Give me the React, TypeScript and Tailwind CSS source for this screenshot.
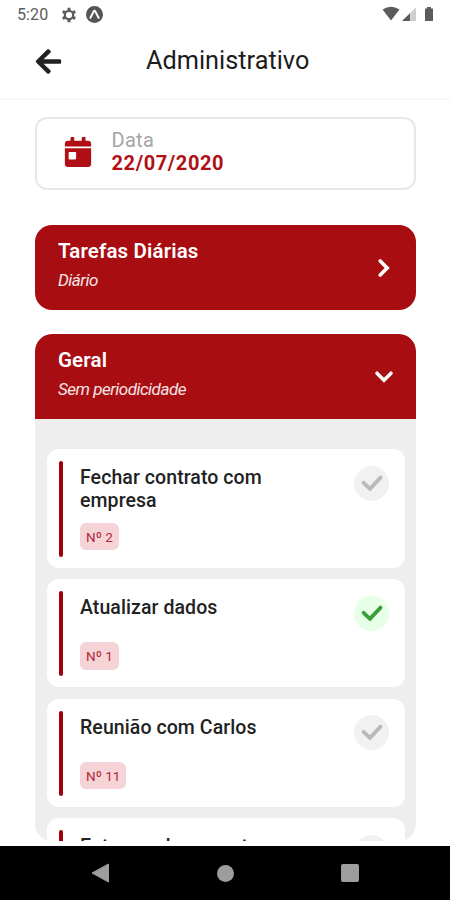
import { FaArrowLeft, FaCalendarDay } from "react-icons/fa";

interface Task {
  title: string;
  number: number;
  done: boolean;
  tall?: boolean;
}

const tasks: Task[] = [
  { title: "Fechar contrato com empresa", number: 2, done: false, tall: true },
  { title: "Atualizar dados", number: 1, done: true },
  { title: "Reunião com Carlos", number: 11, done: false },
  { title: "Entregar documentos", number: 12, done: false },
];

const StatusBar = () => (
  <div className="h-7 shrink-0 flex items-center justify-between pl-[17px] pr-[15px] text-[#5c5c5c]">
    <div className="flex items-center pt-[1px]">
      <span className="w-[44px] text-[16px] leading-5 tracking-[0.1px]">5:20</span>
      <svg className="size-4" viewBox="0 0 16 16" fill="none" stroke="currentColor">
        <circle cx="8" cy="8" r="4.2" strokeWidth="2.2" />
        <path
          d="M8 0.8 V3.4 M8 12.6 V15.2 M1.8 4.4 L4 5.7 M12 10.3 L14.2 11.6 M1.8 11.6 L4 10.3 M12 5.7 L14.2 4.4"
          strokeWidth="3"
        />
      </svg>
      <svg className="ml-[9px] size-[17px]" viewBox="0 0 17 17">
        <circle cx="8.5" cy="8.5" r="8.5" fill="#555" />
        <path
          d="M4.4 11.8 L7.6 5.6 Q8.5 4 9.4 5.6 L12.6 11.8"
          fill="none"
          stroke="#fff"
          strokeWidth="2"
          strokeLinecap="round"
          strokeLinejoin="round"
        />
      </svg>
    </div>
    <svg width="53" height="16" viewBox="0 0 53 16">
      <path d="M0.5 3.5 Q9 -2.2 17.5 3.5 L9 14.5 Z" fill="#5c5c5c" />
      <path d="M20 15 L34 1.5 V15 Z" fill="#cfcfcf" />
      <path d="M20 15 L28 7.2 V15 Z" fill="#5c5c5c" />
      <path d="M43 2.5 H45 V1 H49 V2.5 H51 V15 H43 Z" fill="#5c5c5c" />
    </svg>
  </div>
);

const Chevron = ({ open }: { open?: boolean }) => (
  <svg className={open ? "size-6 rotate-90" : "size-6"} viewBox="0 0 24 24">
    <path
      d="M8.2 5 L15.2 12 L8.2 19"
      fill="none"
      stroke="#fff"
      strokeWidth="3.6"
      strokeLinecap="round"
    />
  </svg>
);

const GroupHeader = ({ title, period, open }: { title: string; period: string; open?: boolean }) => (
  <div
    className={
      open
        ? "h-[85px] shrink-0 flex items-center justify-between rounded-t-[17px] bg-[#a80d11] pl-[23px] pr-5 text-white"
        : "h-[85px] shrink-0 flex items-center justify-between rounded-[17px] bg-[#a80d11] pl-[23px] pr-5 text-white"
    }
  >
    <div className="pb-[5px]">
      <h2 className="text-[20.5px] leading-[30px] font-semibold tracking-[0.15px]">{title}</h2>
      <p className="text-[17px] leading-[28px] italic tracking-[-0.5px] text-white/90">{period}</p>
    </div>
    <Chevron open={open} />
  </div>
);

const TaskCard = ({ title, number, done, tall }: Task) => (
  <article
    className={
      tall
        ? "h-[118.5px] shrink-0 flex rounded-xl bg-white pl-[11.5px] pr-4 pt-3 pb-[11px]"
        : "h-[108px] shrink-0 flex rounded-xl bg-white pl-[11.5px] pr-4 pt-3 pb-[11px]"
    }
  >
    <div className="w-[4.5px] shrink-0 rounded-[2px] bg-[#a00006]" />
    <div className="ml-[17px] flex flex-1 flex-col items-start justify-between pt-[5px] pb-[6.5px]">
      <h3 className="w-[210px] text-[19.5px] leading-[23px] font-medium tracking-[0.08px] text-[#222]">{title}</h3>
      <span className="h-[27.5px] rounded-[6px] bg-[#f6d3d6] px-[6px] text-[13.5px] leading-[28px] text-[#b3263a]">
        Nº {number}
      </span>
    </div>
    <div
      className={
        done
          ? "mt-[4.5px] size-[35px] rounded-full bg-[#e6ffe6] text-[#3a9e3d]"
          : "mt-[4.5px] size-[35px] rounded-full bg-[#f1f1f1] text-[#b9b9b9]"
      }
    >
      <svg viewBox="0 0 35 35">
        <path
          d="M9.6 16.8 L16 22.8 L26.5 11.6"
          fill="none"
          stroke="currentColor"
          strokeWidth="3.8"
          strokeLinecap="round"
        />
      </svg>
    </div>
  </article>
);

const NavBar = () => (
  <nav className="h-[54px] shrink-0 flex items-center justify-between bg-black pl-[91px] pr-[91.5px]">
    <svg width="19" height="20" viewBox="0 0 19 20">
      <path d="M1 10 L17.5 1 V19 Z" fill="#9d9d9d" stroke="#9d9d9d" strokeLinejoin="round" />
    </svg>
    <div className="size-[17px] rounded-full bg-[#9d9d9d]" />
    <div className="size-[18px] rounded-[2px] bg-[#9d9d9d]" />
  </nav>
);

const App = () => {
  return (
    <div className="w-[450px] h-[900px] flex flex-col overflow-hidden bg-white font-['Roboto',sans-serif]">
      <StatusBar />

      <header className="h-[72px] shrink-0 flex items-center border-b-2 border-[#f7f7f7] pl-[35px] pb-[4px]">
        <FaArrowLeft className="size-[29px] -ml-px text-[#222]" />
        <h1 className="ml-[83px] text-[25.3px] leading-8 text-[#1c1c1c]">Administrativo</h1>
      </header>

      <main className="h-[741px] shrink-0 flex flex-col overflow-hidden pl-[35px] pr-[34px] pt-[17px]">
        <section className="h-[73px] shrink-0 flex items-center rounded-xl border-2 border-[#e8e8e8] pl-[25.5px]">
          <FaCalendarDay className="mb-[4px] size-[30px] text-[#b01015]" />
          <div className="ml-[19px] pb-[4px]">
            <p className="text-[20px] leading-[23px] tracking-[0.3px] text-[#a5a5a5]">Data</p>
            <p className="text-[20px] leading-[23px] font-bold tracking-[0.6px] text-[#b01015]">22/07/2020</p>
          </div>
        </section>

        <section className="mt-[35px]">
          <GroupHeader title="Tarefas Diárias" period="Diário" />
        </section>

        <section className="mt-6 h-[507px] shrink-0 flex flex-col overflow-hidden rounded-[17px] bg-[#eeeeee]">
          <GroupHeader title="Geral" period="Sem periodicidade" open />
          <div className="flex flex-col gap-[11.5px] pl-3 pr-[11.5px] pt-[30px]">
            {tasks.map((task) => (
              <TaskCard key={task.number} {...task} />
            ))}
          </div>
        </section>
      </main>

      <div className="h-[5px] shrink-0 bg-white" />
      <NavBar />
    </div>
  );
};

export default App;
